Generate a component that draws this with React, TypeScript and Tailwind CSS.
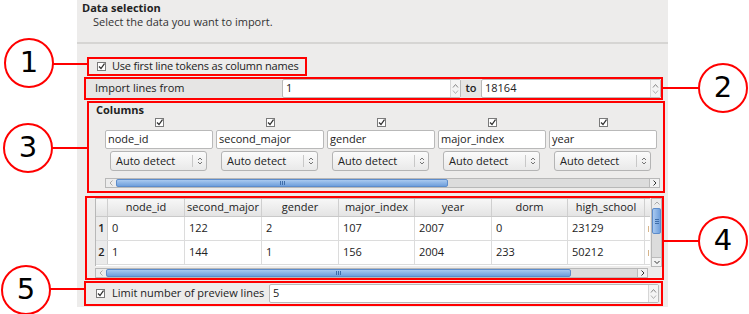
const Check = () => (
  <div className="flex h-[9px] w-[9px] shrink-0 items-center justify-center border border-[#7a7a7a] bg-white">
    <svg width="7" height="7" viewBox="0 0 7 7">
      <path d="M1 3.5 L3 5.5 L6.5 0.5" fill="none" stroke="#333" strokeWidth="1.3" />
    </svg>
  </div>
);

const SpinArrows = () => (
  <div className="flex w-[10px] flex-col items-center justify-center border-l border-[#d6d6d6] bg-[#f4f4f4]">
    <svg width="7" height="6" viewBox="0 0 7 6">
      <path d="M1 4.5 L3.5 1.5 L6 4.5" fill="none" stroke="#8a8a8a" strokeWidth="1" />
    </svg>
    <svg width="7" height="6" viewBox="0 0 7 6">
      <path d="M1 1.5 L3.5 4.5 L6 1.5" fill="none" stroke="#b0b0b0" strokeWidth="1" />
    </svg>
  </div>
);

const SpinBox = ({ value, className }: { value: string; className: string }) => (
  <div className={`flex h-[19px] rounded-[2px] border border-[#b9b9b9] bg-white ${className}`}>
    <div className="flex flex-1 items-center pl-[3px] text-[11px] text-[#222]">{value}</div>
    <SpinArrows />
  </div>
);

const Combo = () => (
  <div className="ml-[5px] flex h-[20px] w-[97px] items-center rounded-[3px] border border-[#b4b4b4] bg-gradient-to-b from-[#fbfbfb] to-[#e9e9e9]">
    <span className="flex-1 pl-[5px] text-[11px] text-[#222]">Auto detect</span>
    <div className="flex h-[12px] w-[14px] flex-col items-center justify-center border-l border-[#c8c8c8]">
      <svg width="6" height="10" viewBox="0 0 6 10">
        <path d="M1 4 L3 2 L5 4 M1 6 L3 8 L5 6" fill="none" stroke="#666" strokeWidth="0.9" />
      </svg>
    </div>
  </div>
);

const HScroll = ({ thumbEnd, width }: { thumbEnd: string; width: string }) => (
  <div className={`flex h-[10px] border border-[#b8b8b8] bg-[#dcdcdc] ${width}`}>
    <div className="flex w-[10px] items-center justify-center bg-[#ececec]">
      <svg width="5" height="6" viewBox="0 0 5 6">
        <path d="M3.5 0.5 L1 3 L3.5 5.5" fill="none" stroke="#aaa" strokeWidth="1" />
      </svg>
    </div>
    <div
      className={`flex items-center justify-center rounded-[2px] border border-[#5d8ccb] bg-gradient-to-b from-[#a9c9ef] to-[#6f9fdc] ${thumbEnd}`}
    >
      <div className="flex gap-[1px]">
        <div className="h-[4px] w-px bg-[#3f6eaa]" />
        <div className="h-[4px] w-px bg-[#3f6eaa]" />
        <div className="h-[4px] w-px bg-[#3f6eaa]" />
      </div>
    </div>
    <div className="flex-1" />
    <div className="flex w-[10px] items-center justify-center border-l border-[#bbb] bg-[#f2f2f2]">
      <svg width="5" height="6" viewBox="0 0 5 6">
        <path d="M1.5 0.5 L4 3 L1.5 5.5" fill="none" stroke="#333" strokeWidth="1" />
      </svg>
    </div>
  </div>
);

const columns = ["node_id", "second_major", "gender", "major_index", "year"];

const tableCols = [
  { name: "node_id", w: "w-[77px]" },
  { name: "second_major", w: "w-[77px]" },
  { name: "gender", w: "w-[77px]" },
  { name: "major_index", w: "w-[76px]" },
  { name: "year", w: "w-[77px]" },
  { name: "dorm", w: "w-[76px]" },
  { name: "high_school", w: "w-[77px]" },
];

const rows = [
  ["0", "122", "2", "107", "2007", "0", "23129"],
  ["1", "144", "1", "156", "2004", "233", "50212"],
];

const Circle = ({ n, className }: { n: string; className: string }) => (
  <div
    className={`absolute flex h-[50px] w-[50px] items-center justify-center rounded-full border-2 border-[#ff0000] bg-white font-['DejaVu_Sans'] text-[29px] text-black ${className}`}
  >
    {n}
  </div>
);

const Line = ({ className }: { className: string }) => (
  <div className={`absolute h-[2px] bg-[#ff0000] ${className}`} />
);

export default function App() {
  return (
    <div className="relative h-[314px] w-[749px] overflow-hidden bg-white font-['Open_Sans',sans-serif] text-[#222]">
      <div className="ml-[77px] flex h-[307px] w-[591px] flex-col bg-[#edeceb]">
        <div className="h-[42px] pl-[5px] pt-px">
          <div className="text-[11px] font-bold leading-[14px] text-[#222]">Data selection</div>
          <div className="pl-[11px] text-[11px] leading-[14px] text-[#333]">
            Select the data you want to import.
          </div>
        </div>
        <div className="h-[2px] bg-[#d6d5d3]" />

        <div className="ml-[10px] mt-[13px] flex h-[19px] w-[220px] items-center border-2 border-[#ff0000] pl-[8px]">
          <Check />
          <span className="ml-[6px] whitespace-nowrap text-[11px] tracking-[-0.2px]">
            Use first line tokens as column names
          </span>
        </div>

        <div className="ml-[7px] mt-px flex h-[23px] w-[579px] items-center border-2 border-[#ff0000]">
          <div className="flex h-full w-[196px] items-center bg-[#e6e5e4] pl-[9px] text-[11px]">
            Import lines from
          </div>
          <SpinBox value="1" className="w-[179px]" />
          <div className="flex h-[19px] w-[20px] items-center justify-center bg-[#e6e5e4] text-[11px] font-semibold">
            to
          </div>
          <SpinBox value="18164" className="w-[180px]" />
        </div>

        <div className="ml-[10px] mt-px flex h-[92px] w-[578px] flex-col border-2 border-[#ff0000]">
          <div className="pl-[7px] text-[11px] font-bold leading-[13px]">Columns</div>
          <div className="ml-[16px] w-[555px] overflow-hidden">
            <div className="flex">
              {columns.map((c) => (
                <div key={c} className="flex w-[111px] shrink-0 flex-col">
                  <div className="flex w-[108px] justify-center pt-[2px]">
                    <Check />
                  </div>
                  <div className="mt-[3px] flex h-[19px] w-[108px] items-center rounded-[2px] border border-[#b9b9b9] bg-white pl-[2px] text-[11px]">
                    {c}
                  </div>
                  <div className="mt-[2px]">
                    <Combo />
                  </div>
                </div>
              ))}
            </div>
            <div className="mt-[7px]">
              <HScroll thumbEnd="w-[332px]" width="w-[555px]" />
            </div>
          </div>
        </div>

        <div className="ml-[8px] mt-[3px] flex h-[84px] w-[579px] flex-col border-2 border-[#ff0000] pl-[8px]">
          <div className="flex">
            <div className="h-[68px] w-[555px] overflow-hidden border-l border-t border-[#b8b8b8] bg-white">
              <div className="flex h-[18px] border-b border-[#c9c9c9] bg-gradient-to-b from-[#f7f7f7] to-[#e4e4e4]">
                <div className="w-[12px] shrink-0 border-r border-[#cfcfcf]" />
                {tableCols.map((c, i) => (
                  <div
                    key={i}
                    className={`${c.w} flex shrink-0 items-center justify-center overflow-hidden whitespace-nowrap border-r border-[#cfcfcf] text-[11px]`}
                  >
                    {c.name}
                  </div>
                ))}
                <div className="w-[20px] shrink-0" />
              </div>
              {rows.map((r, ri) => (
                <div key={ri} className="flex h-[24px] border-b border-[#dcdcdc]">
                  <div className="flex w-[12px] shrink-0 items-center justify-center border-r border-[#cfcfcf] bg-[#ebebeb] text-[11px] font-semibold">
                    {ri + 1}
                  </div>
                  {tableCols.map((c, i) => (
                    <div
                      key={i}
                      className={`${c.w} flex shrink-0 items-center overflow-hidden border-r border-[#dcdcdc] pl-[4px] text-[11px]`}
                    >
                      {r[i]}
                    </div>
                  ))}
                  <div className="flex w-[20px] shrink-0 items-center pl-[3px]">
                    <div className="h-[6px] w-px bg-[#d6b48a]" />
                  </div>
                </div>
              ))}
            </div>
            <div className="ml-px flex h-[69px] w-[11px] flex-col border border-[#b8b8b8] bg-[#dcdcdc]">
              <div className="flex h-[9px] items-center justify-center bg-[#ececec]">
                <svg width="6" height="5" viewBox="0 0 6 5">
                  <path d="M0.5 3.5 L3 1 L5.5 3.5" fill="none" stroke="#aaa" strokeWidth="1" />
                </svg>
              </div>
              <div className="flex h-[26px] flex-col items-center justify-center gap-px rounded-[2px] border border-[#5d8ccb] bg-gradient-to-r from-[#a9c9ef] to-[#6f9fdc]">
                <div className="h-px w-[4px] bg-[#3f6eaa]" />
                <div className="h-px w-[4px] bg-[#3f6eaa]" />
                <div className="h-px w-[4px] bg-[#3f6eaa]" />
              </div>
              <div className="flex-1" />
              <div className="flex h-[9px] items-center justify-center border-t border-[#bbb] bg-[#f2f2f2]">
                <svg width="6" height="5" viewBox="0 0 6 5">
                  <path d="M0.5 1 L3 3.5 L5.5 1" fill="none" stroke="#333" strokeWidth="1" />
                </svg>
              </div>
            </div>
          </div>
          <div className="mt-px">
            <HScroll thumbEnd="w-[465px]" width="w-[553px]" />
          </div>
        </div>

        <div className="ml-[7px] mt-px flex h-[25px] w-[579px] items-center border-2 border-[#ff0000] pl-[10px]">
          <Check />
          <span className="ml-[7px] w-[157px] whitespace-nowrap text-[11px]">
            Limit number of preview lines
          </span>
          <SpinBox value="5" className="w-[390px]" />
        </div>
      </div>

      <Circle n="1" className="left-[4px] top-[38px]" />
      <Line className="left-[53px] top-[63px] w-[35px]" />
      <Circle n="2" className="left-[698px] top-[63px]" />
      <Line className="left-[662px] top-[87px] w-[37px]" />
      <Circle n="3" className="left-[3px] top-[123px]" />
      <Line className="left-[52px] top-[147px] w-[36px]" />
      <Circle n="4" className="left-[698px] top-[216px]" />
      <Line className="left-[663px] top-[240px] w-[36px]" />
      <Circle n="5" className="left-[1px] top-[265px]" />
      <Line className="left-[50px] top-[288px] w-[35px]" />
    </div>
  );
}
